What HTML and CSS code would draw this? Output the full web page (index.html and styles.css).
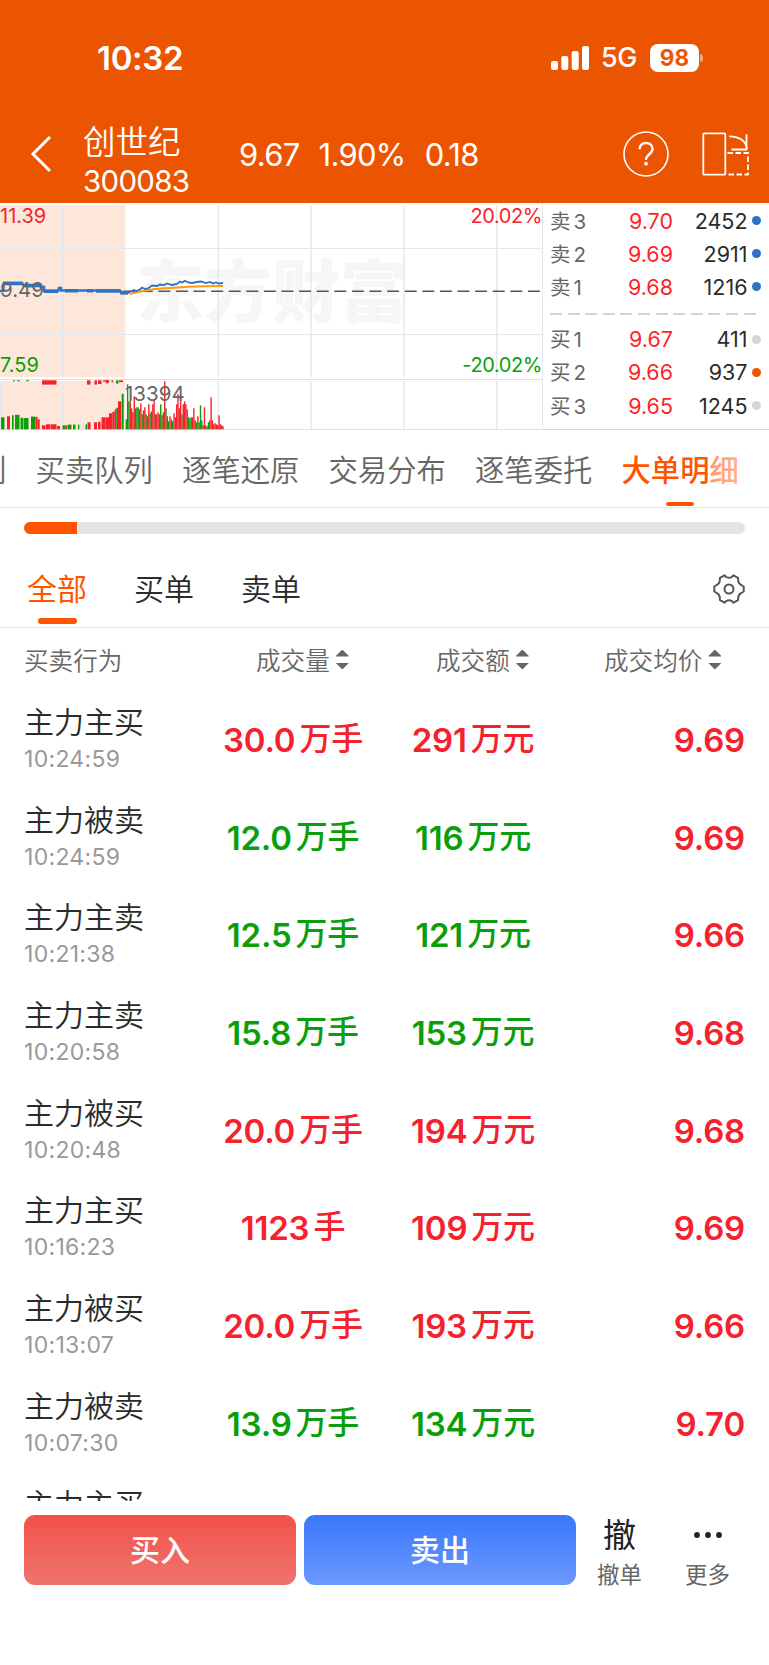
FILE: index.html
```
<!DOCTYPE html>
<html lang="zh-CN">
<head>
    <meta charset="UTF-8">
    <meta name="viewport" content="width=device-width, initial-scale=1.0">
    <title>创世纪 300083</title>
    <link rel="stylesheet" href="styles.css">
</head>
<body>
    <header class="top">
        <div class="status">
            <span class="clock">10:32</span>
            <div class="status-right">
                <svg class="signal" width="38" height="24" viewBox="0 0 38 24" fill="#fff">
                    <rect x="0" y="15" width="7" height="9" rx="2"/>
                    <rect x="10.3" y="10" width="7" height="14" rx="2"/>
                    <rect x="20.7" y="5" width="7" height="19" rx="2"/>
                    <rect x="31" y="0" width="7" height="24" rx="2"/>
                </svg>
                <span class="net">5G</span>
                <span class="battery">98</span>
                <span class="nub"></span>
            </div>
        </div>
        <div class="nav">
            <svg class="back" width="22" height="38" viewBox="0 0 22 38" fill="none" stroke="#fff" stroke-width="3">
                <path d="M20 2 3 19l17 17"/>
            </svg>
            <div class="stock">
                <div class="stock-name">创世纪</div>
                <div class="stock-code">300083</div>
            </div>
            <div class="quote"><span>9.67</span><span>1.90%</span><span>0.18</span></div>
            <svg class="help" width="46" height="46" viewBox="0 0 46 46" fill="none" stroke="#fff">
                <circle cx="23" cy="23" r="22" stroke-width="1.6"/>
                <path d="M16.5 18.3c0-4 2.8-6.3 6.5-6.3s6.6 2.4 6.6 6c0 5.2-6.6 5.400-6.600 10.800" stroke-width="2.400"/>
                <circle cx="23" cy="32.7" r="1.9" fill="#fff" stroke="none"/>
            </svg>
            <svg class="rotate" width="48" height="46" viewBox="0 0 48 46" fill="none" stroke="#fff" stroke-width="1.8">
                <rect x="1.3" y="2.3" width="22" height="41.4" rx="1"/>
                <path d="M27.3 5.3c9 0 16.500 4 17.700 12.500"/>
                <path d="M44.500 3.300v15.200H29.500"/>
                <path d="M25.500 22h20.500v21.500H25.500" stroke-dasharray="5.500 2.500"/>
            </svg>
        </div>
    </header>

    <section class="market">
        <svg class="chart" width="543" height="227" viewBox="0 203 543 227">
            <g fill="#fde6da">
                <rect x="0" y="205" width="125.300" height="172"/>
                <rect x="0" y="381" width="125.300" height="48"/>
            </g>
            <text class="watermark" x="136" y="317">东方财富</text>
            <g stroke="#e4e7ef" stroke-width="1.500">
                <path d="M62.700 205V377M218.300 205V377M311 205V377M404 205V377M496.700 205V377"/>
                <path d="M62.700 381V429M218.300 381V429M311 381V429M404 381V429M496.700 381V429"/>
                <path d="M0 248.500H542M0 334.500H542" stroke-width="1.200"/>
                <path d="M542.500 203V429.500M0.500 381V429" stroke-width="1"/>
            </g>
            <path d="M0 379.500H542M0 429.500H543" stroke="#dfe0e4" stroke-width="1"/>
            <path d="M123.100 291.300H541" stroke="#555" stroke-width="1.500" stroke-dasharray="12 5.600"/>
            <g id="volume"></g>
            <text x="0" y="222.500" fill="#f5222d">11.39</text>
            <text x="0" y="371.800" fill="#0a9f0a">7.59</text>
            <text class="pct" x="542" y="222.500" fill="#f5222d" text-anchor="end">20.02%</text>
            <text class="pct" x="542" y="371.800" fill="#0a9f0a" text-anchor="end">-20.02%</text>
            <path d="M130 294 138 292 147 290.500 155 289 165 288.300 178 287.500 188 286.800 205 286.200 223 286" fill="none" stroke="#ff9a0c" stroke-width="2"/>
            <g fill="none" stroke="#2f72c4">
                <path d="M0 291H3L4 283H22L24 286H34V285H41V287H44V291H58L59 288H61V290.500H120L122 293H128" stroke-width="2.500"/>
                <path d="M3 283.500H22M26 285.500H41M44 291.300H58M65 290.700H78M87 290.700H93M96 291H120M120 292.800H128" stroke-width="3.500"/>
                <path d="M127 293.500 132 291 134 290 136 291 140 289.500 142 287.500 145 289 148 288.500 152 285.500 157 286 160 284.500 164 285 167 283.500 172 285 177 284 180 281.500 182 282.500 185 280.800 188 282.500 192 283 197 282 201 281.500 206 283 210 282 213 283.500 216 282.500 219 283.500 223 283" stroke-width="1.800"/>
            </g>
            <text class="mid" x="0" y="297" fill="#666">9.49</text>
            <text class="mid" x="125" y="400.500" fill="#666">13394</text>
        </svg>
        <div class="book">
            <div class="level"><span class="side">卖3</span><span class="price">9.70</span><span class="qty">2452</span><i class="dot blue"></i></div>
            <div class="level"><span class="side">卖2</span><span class="price">9.69</span><span class="qty">2911</span><i class="dot blue"></i></div>
            <div class="level"><span class="side">卖1</span><span class="price">9.68</span><span class="qty">1216</span><i class="dot blue"></i></div>
            <div class="divider"></div>
            <div class="level"><span class="side">买1</span><span class="price">9.67</span><span class="qty">411</span><i class="dot"></i></div>
            <div class="level"><span class="side">买2</span><span class="price">9.66</span><span class="qty">937</span><i class="dot orange"></i></div>
            <div class="level"><span class="side">买3</span><span class="price">9.65</span><span class="qty">1245</span><i class="dot"></i></div>
        </div>
    </section>

    <nav class="tabs">
        <span class="cut">列</span>
        <span>买卖队列</span>
        <span>逐笔还原</span>
        <span>交易分布</span>
        <span>逐笔委托</span>
        <span class="active">大单明细</span>
    </nav>

    <div class="progress"><div class="progress-fill"></div></div>

    <div class="filters">
        <span class="active">全部</span>
        <span>买单</span>
        <span>卖单</span>
        <svg class="gear" width="32" height="30" viewBox="0 0 32 30" fill="none" stroke="#555" stroke-width="2" stroke-linejoin="round">
            <path d="M11.500 1.300 13.200 3Q16 4.600 18.800 3L20.500 1.300 25 3.800 25.300 7.200Q25.800 10 28.300 11L30.700 12.500V17.500L28.300 19Q25.800 20 25.300 22.800L25 26.200 20.500 28.700 18.800 27Q16 25.400 13.200 27L11.500 28.700 7 26.200 6.700 22.800Q6.200 20 3.700 19L1.300 17.500V12.500L3.700 11Q6.200 10 6.700 7.200L7 3.800Z"/>
            <circle cx="16" cy="15" r="4.500"/>
        </svg>
    </div>

    <div class="list-head">
        <span>买卖行为</span>
        <span class="sort">成交量<i></i></span>
        <span class="sort">成交额<i></i></span>
        <span class="sort">成交均价<i></i></span>
    </div>

    <main class="list">
        <div class="row buy">
            <div class="act"><b>主力主买</b><small>10:24:59</small></div>
            <div class="vol">30.0<em>万手</em></div><div class="amt">291<em>万元</em></div><div class="avg">9.69</div>
        </div>
        <div class="row sell">
            <div class="act"><b>主力被卖</b><small>10:24:59</small></div>
            <div class="vol">12.0<em>万手</em></div><div class="amt">116<em>万元</em></div><div class="avg">9.69</div>
        </div>
        <div class="row sell">
            <div class="act"><b>主力主卖</b><small>10:21:38</small></div>
            <div class="vol">12.5<em>万手</em></div><div class="amt">121<em>万元</em></div><div class="avg">9.66</div>
        </div>
        <div class="row sell">
            <div class="act"><b>主力主卖</b><small>10:20:58</small></div>
            <div class="vol">15.8<em>万手</em></div><div class="amt">153<em>万元</em></div><div class="avg">9.68</div>
        </div>
        <div class="row buy">
            <div class="act"><b>主力被买</b><small>10:20:48</small></div>
            <div class="vol">20.0<em>万手</em></div><div class="amt">194<em>万元</em></div><div class="avg">9.68</div>
        </div>
        <div class="row buy">
            <div class="act"><b>主力主买</b><small>10:16:23</small></div>
            <div class="vol">1123<em>手</em></div><div class="amt">109<em>万元</em></div><div class="avg">9.69</div>
        </div>
        <div class="row buy">
            <div class="act"><b>主力被买</b><small>10:13:07</small></div>
            <div class="vol">20.0<em>万手</em></div><div class="amt">193<em>万元</em></div><div class="avg">9.66</div>
        </div>
        <div class="row sell">
            <div class="act"><b>主力被卖</b><small>10:07:30</small></div>
            <div class="vol">13.9<em>万手</em></div><div class="amt">134<em>万元</em></div><div class="avg">9.70</div>
        </div>
        <div class="row buy">
            <div class="act"><b>主力主买</b></div>
        </div>
    </main>

    <footer class="trade">
        <button class="btn btn-buy">买入</button>
        <button class="btn btn-sell">卖出</button>
        <div class="tool"><span class="tool-icon">撤</span><span>撤单</span></div>
        <div class="tool more">
            <span class="tool-icon"><svg width="30" height="8" viewBox="0 0 30 8" fill="#222"><circle cx="4" cy="4" r="2.900"/><circle cx="15" cy="4" r="2.900"/><circle cx="26" cy="4" r="2.900"/></svg></span>
            <span>更多</span>
        </div>
    </footer>

    <script>
        const volume = document.getElementById("volume");
        const colors = { r: "#f5222d", g: "#0a9f0a" };

        const addBar = (x, y, width, height, color) => {
            volume.innerHTML += `<rect x="${x}" y="${y}" width="${width}" height="${height}" fill="${colors[color]}"/>`;
        };

        // call auction: x, width, height, color
        const auction = [
            [1, 3.5, 12, "g"], [7, 3, 13, "r"], [12, 1.7, 14, "g"], [15, 4.5, 14.5, "g"], [20.500, 2.500, 11.500, "g"],
            [23.500, 5, 11.300, "g"], [31, 4, 12.700, "g"], [35.300, 2.300, 12.500, "r"], [37.700, 2, 10, "r"],
            [42, 3.500, 4, "r"], [46, 4.500, 5, "r"], [51, 5.500, 5, "r"], [57, 3, 3.300, "r"], [62.500, 3, 4, "g"],
            [65.500, 1.500, 4, "r"], [67.500, 4, 4.700, "g"], [73, 2.500, 4.800, "g"], [78, 1.300, 4.800, "g"],
            [85.500, 1.500, 5, "g"], [87.500, 3, 7, "r"], [94, 3, 7, "r"], [98, 2.500, 7.500, "r"], [101.500, 3.700, 12, "r"],
            [105.300, 3.700, 12, "r"], [109, 3.300, 16, "r"], [112.300, 2.400, 17.500, "r"], [114.700, 1.600, 20, "r"],
            [116.300, 1.700, 21.500, "g"], [118, 3.300, 28, "r"], [121.700, 2, 35.500, "g"]
        ];
        auction.forEach(([x, w, h, c]) => addBar(x, 429.3 - h, w, h, c));

        const hanging = [
            [13, 2, 1, "g"], [17, 3, 1, "g"], [26, 3, 1, "g"], [42, 14.500, 4.300, "r"], [87, 3.500, 4.300, "r"],
            [94.500, 2.500, 4.300, "r"], [98, 3.500, 3.700, "r"], [103, 6.500, 1.500, "r"], [106, 2.500, 3, "r"],
            [111.500, 1.700, 2, "r"], [116, 2.500, 3.300, "g"], [119, 4, 1.800, "r"]
        ];
        hanging.forEach(([x, w, h, c]) => addBar(x, 380.3, w, h, c));

        // one bar per minute
        const minutes = "g10 g45 g28 r28 r21 r17 r33 g21 g22 g22 r20 r26 g15 r19 r22 g15 r13 r25 g16 r18 r25 r30 g15 r15 r17 r15 g25 r14 g17 r48 g21 r13 g8 r13 r10 g8 r16 r12 r25 r35 r21 r33 g15 r25 r28 r25 r20 g12 g11 g12 r12 r21 r9 g7 r13 g7 g24 g9 r4 r22 r4 g3 g7 r9 r32 r9 r5 r6 r5 r4 r14 r5 g4 r3".split(" ");
        minutes.forEach((bar, i) => {
            const h = Number(bar.slice(1));
            addBar((125.6 + i * 1.325).toFixed(2), 429.3 - h, 1.4, h, bar[0]);
        });
    </script>
</body>
</html>
```
FILE: styles.css
```
*{
    margin: 0;
    padding: 0;
    box-sizing: border-box;
}
body{
    width: 769px;
    height: 1665px;
    overflow: hidden;
    background-color: #fff;
    color: #2b2b2b;
    font-family: Inter, "Noto Sans CJK SC", sans-serif;
}
svg{
    display: block;
    flex: none;
}
.top{
    height: 203px;
    background-color: #eb5502;
    color: #fff;
}
.status{
    display: flex;
    justify-content: space-between;
    align-items: center;
    height: 115px;
    padding: 0 66px 0 97px;
}
.clock{
    font-size: 33px;
    font-weight: 600;
    letter-spacing: -0.300px;
}
.status-right{
    display: flex;
    align-items: center;
}
.net{
    margin-left: 12px;
    font-size: 27px;
    font-weight: 500;
    width: 49px;
    letter-spacing: -0.500px;
}
.battery{
    width: 49px;
    height: 28px;
    border-radius: 8px;
    background-color: #fff;
    color: #eb5502;
    font-size: 22.500px;
    font-weight: 700;
    line-height: 28px;
    text-align: center;
}
.nub{
    width: 3px;
    height: 8px;
    margin-left: 1px;
    border-radius: 0 3px 3px 0;
    background-color: #f5a77c;
}
.nav{
    display: flex;
    align-items: center;
    height: 78px;
    padding: 0 19px 0 30px;
}
.stock{
    width: 156px;
    margin-left: 31px;
    padding-top: 16px;
}
.stock-name{
    font-size: 32.500px;
    font-weight: 350;
    line-height: 38px;
}
.stock-code{
    font-size: 29.500px;
    line-height: 38px;
    letter-spacing: -0.700px;
}
.quote{
    display: flex;
    gap: 19px;
    flex: 1;
    font-size: 31px;
    letter-spacing: -0.700px;
}
.rotate{
    margin-left: 33px;
}
.market{
    display: flex;
    height: 227px;
}
.chart text{
    font-size: 20px;
}
.chart .pct{
    letter-spacing: -0.400px;
}
.chart .mid{
    font-size: 20.500px;
}
.chart .watermark{
    font-size: 68px;
    font-weight: 900;
    fill: #f6f6f6;
}
.book{
    flex: 1;
    padding: 1px 8.500px 0 7px;
    border-bottom: 1px solid #d5d6da;
}
.level{
    display: flex;
    align-items: center;
    height: 33.200px;
    font-size: 21.500px;
}
.side{
    width: 50px;
    margin-top: -2px;
    color: #666;
    font-size: 20.500px;
    letter-spacing: 3px;
}
.price{
    width: 73px;
    color: #ff1f26;
    text-align: right;
}
.qty{
    flex: 1;
    text-align: right;
}
.dot{
    width: 9px;
    height: 9px;
    margin-left: 4px;
    border-radius: 50%;
    background-color: #d3d6dc;
}
.blue{
    background-color: #2f72c4;
}
.orange{
    background-color: #eb5502;
}
.divider{
    height: 2px;
    margin: 9px 2px 8px 0;
    background: repeating-linear-gradient(90deg, #d3d4da 0 12px, transparent 12px 17.600px);
}
.tabs{
    display: flex;
    gap: 29.300px;
    position: relative;
    height: 78px;
    overflow: hidden;
    border-bottom: 1px solid #e8e8e8;
    color: #666;
    font-size: 29.300px;
    font-weight: 350;
    line-height: 81px;
    white-space: nowrap;
}
.tabs .cut{
    margin-left: -23px;
}
.tabs .active{
    position: relative;
    color: #ff5500;
    font-weight: 500;
}
.tabs .active::after{
    content: "";
    position: absolute;
    left: 44px;
    top: 72px;
    width: 28px;
    height: 4px;
    border-radius: 2px;
    background-color: #ff5500;
}
/* fade at the scrolling edge */
.tabs::after{
    content: "";
    position: absolute;
    top: 0;
    right: 0;
    width: 60px;
    height: 70px;
    background: linear-gradient(90deg, rgba(255,255,255,.4), rgba(255,255,255,.7));
}
.progress{
    height: 12px;
    margin: 14px 24px 0;
    border-radius: 6px;
    background-color: #e3e3e3;
    overflow: hidden;
}
.progress-fill{
    width: 52.500px;
    height: 12px;
    background-color: #ff5500;
}
.filters{
    display: flex;
    align-items: center;
    gap: 47px;
    height: 94px;
    padding: 16px 24px 0 27px;
    border-bottom: 1px solid #e8e8e8;
    font-size: 30px;
    font-weight: 350;
}
.filters span{
    position: relative;
    margin-top: -3px;
}
.filters .active{
    color: #ff5500;
    font-weight: 400;
}
.filters .active::after{
    content: "";
    position: absolute;
    left: 11px;
    bottom: -15px;
    width: 39px;
    height: 6px;
    border-radius: 3px;
    background-color: #ff5500;
}
.gear{
    margin-left: auto;
}
.list-head{
    display: grid;
    grid-template-columns: 232px 180px 168px 1fr;
    align-items: center;
    height: 64px;
    padding: 0 0 3px 24px;
    color: #666;
    font-size: 24.600px;
    font-weight: 350;
}
.sort{
    display: flex;
    align-items: center;
    gap: 6px;
}
.sort i{
    width: 13px;
    height: 20px;
    margin-top: 2px;
    background:
        linear-gradient(#666, #666) 0 0 / 13px 6.500px no-repeat,
        linear-gradient(#666, #666) 0 100% / 13px 6.500px no-repeat;
    clip-path: polygon(50% 0, 100% 33%, 100% 67%, 50% 100%, 0 67%, 0 33%);
}
.list{
    height: 809px;
    overflow: hidden;
}
.row{
    display: grid;
    grid-template-columns: 188px 162px 198px 1fr;
    align-items: center;
    height: 97.700px;
    padding: 0 24px 2px;
    font-size: 33px;
    font-weight: 600;
    letter-spacing: -0.200px;
}
.act{
    display: flex;
    flex-direction: column;
    height: 95.700px;
    padding-top: 10px;
}
.act b{
    color: #2b2b2b;
    font-size: 30px;
    font-weight: 350;
    line-height: 41px;
    letter-spacing: 0;
}
.act small{
    color: #999;
    font-size: 23px;
    font-weight: 400;
    line-height: 33px;
    letter-spacing: 0.300px;
}
.vol, .amt{
    display: flex;
    justify-content: center;
    line-height: 44px;
    white-space: nowrap;
}
.row em{
    margin: -1px 0 0 4px;
    font-size: 32px;
    font-style: normal;
    font-weight: 500;
}
.avg{
    color: #f5222d;
    text-align: right;
}
.buy{
    color: #f5222d;
}
.sell{
    color: #0a9f0a;
}
.trade{
    display: flex;
    gap: 8px;
    padding: 14px 0 0 24px;
}
.btn{
    width: 272px;
    height: 70px;
    padding-bottom: 4px;
    border: none;
    border-radius: 11px;
    color: #fff;
    font-family: inherit;
    font-size: 30px;
    font-weight: 500;
}
.btn-buy{
    background: linear-gradient(#f4504a, #ed756e);
}
.btn-sell{
    background: linear-gradient(#3a77fa, #6d98ff);
}
.tool{
    display: flex;
    flex-direction: column;
    align-items: center;
    width: 73px;
    margin-left: -1px;
    color: #666;
    font-size: 22.500px;
    line-height: 39px;
}
.tool-icon{
    display: flex;
    align-items: center;
    height: 40px;
    color: #222;
    font-size: 33px;
}
.more{
    margin-left: 7px;
}
```
